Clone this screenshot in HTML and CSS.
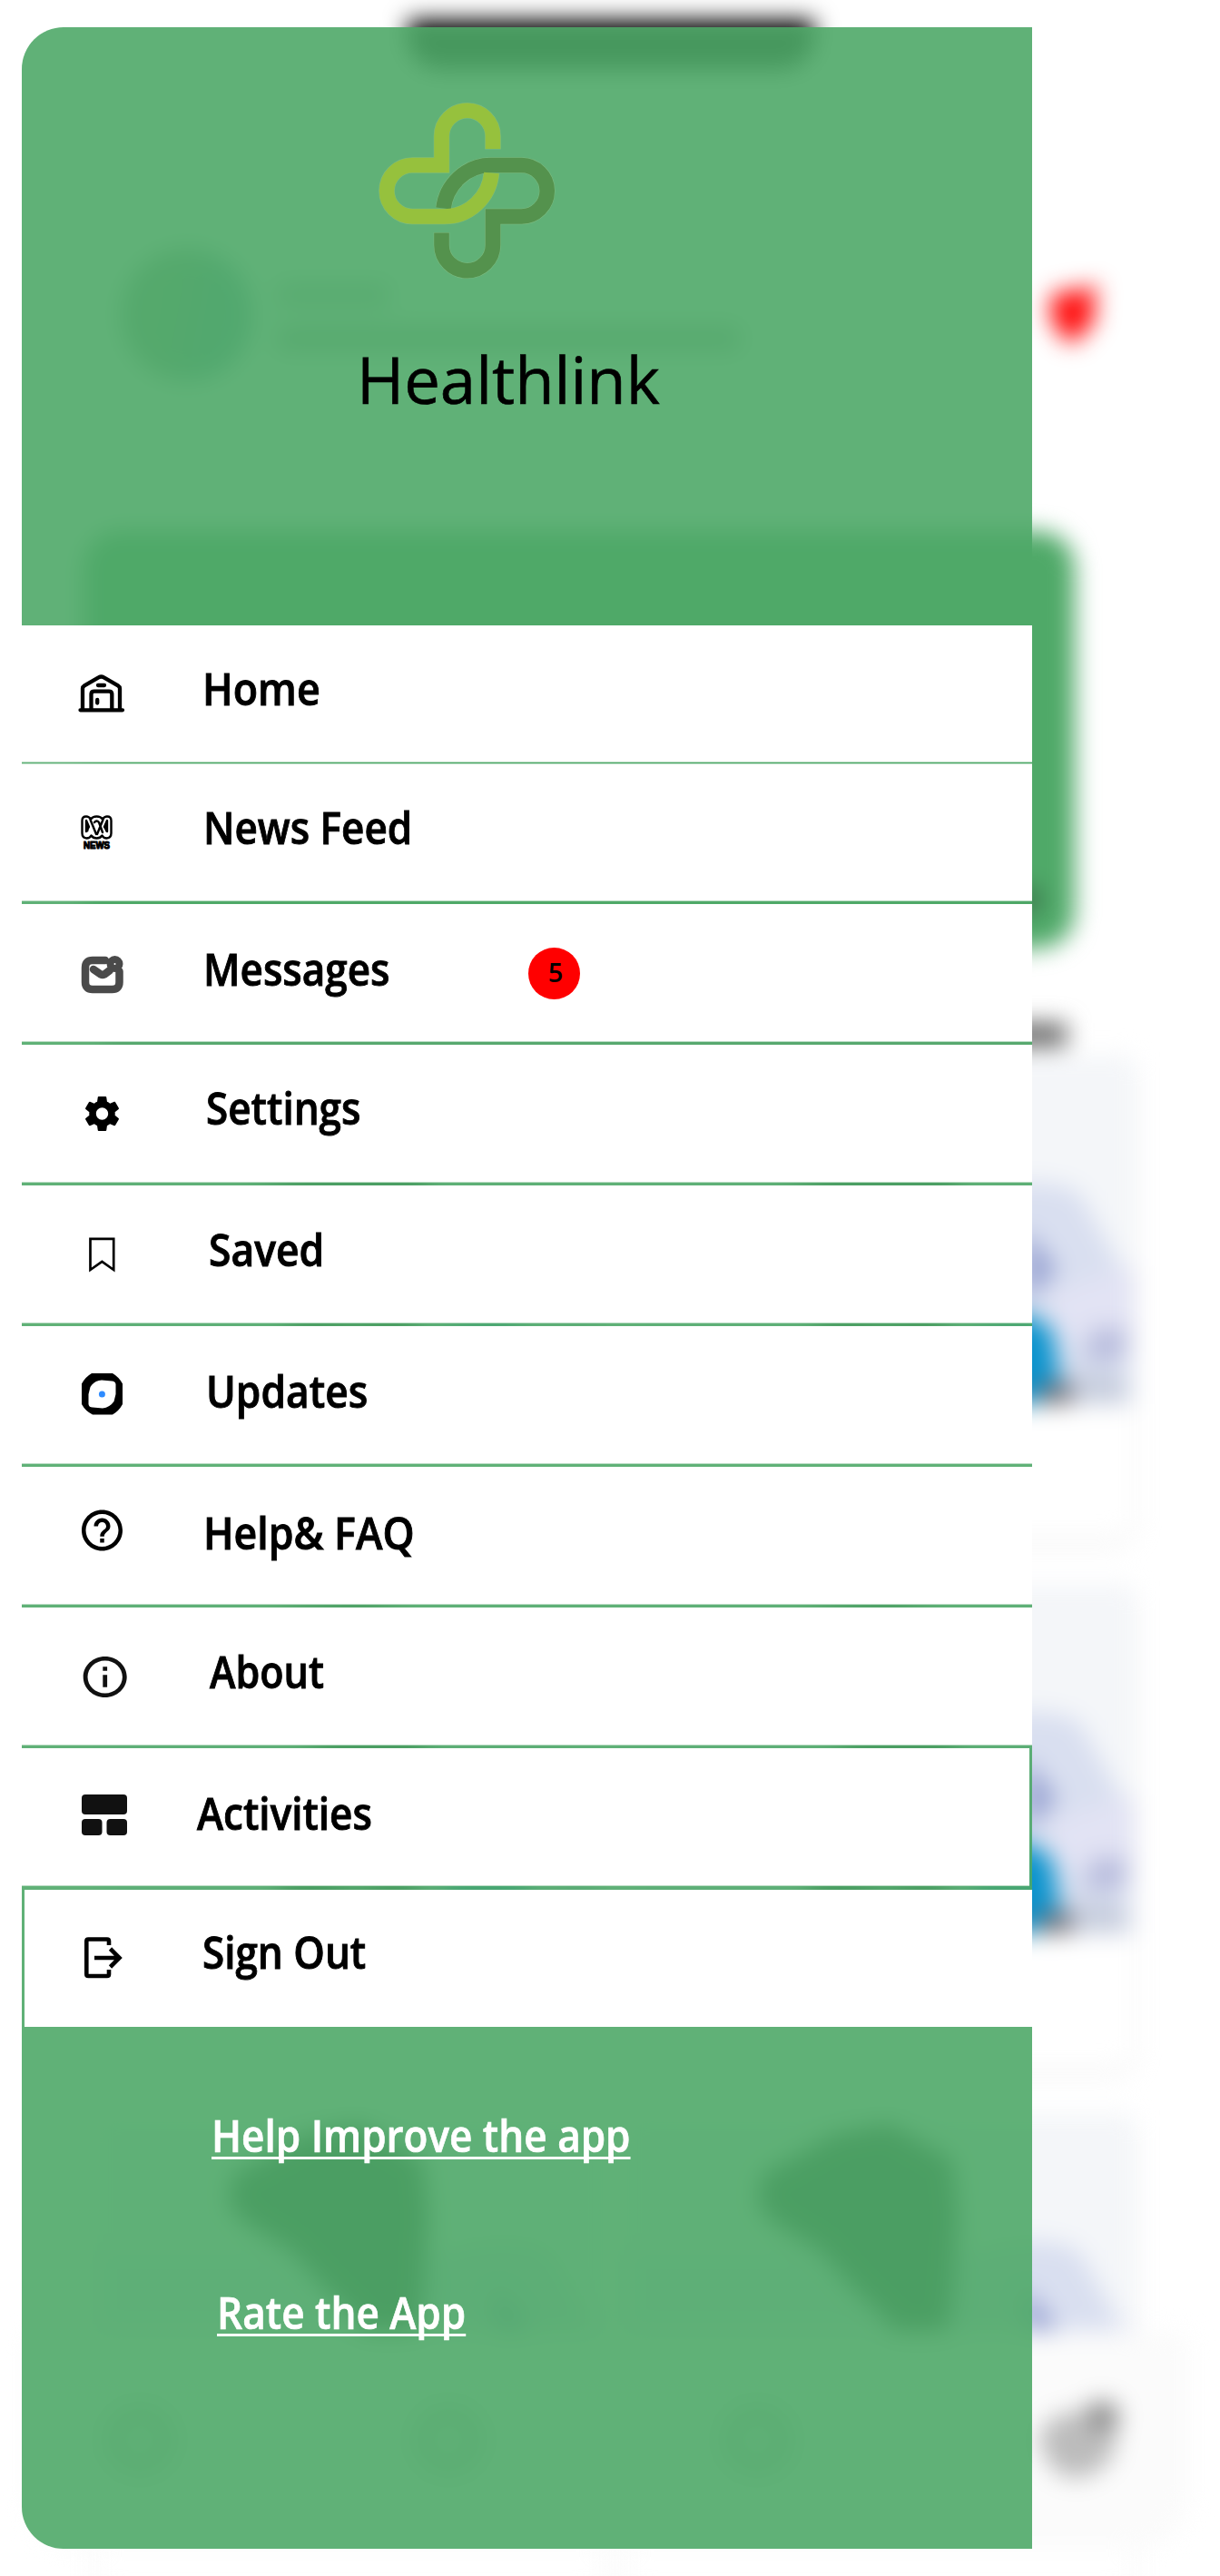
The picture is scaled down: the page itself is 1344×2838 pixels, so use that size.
FILE: index.html
```html
<!DOCTYPE html>
<html lang="en">
<head>
<meta charset="utf-8">
<title>Healthlink</title>
<link rel="stylesheet" href="styles.css">
</head>
<body>
<svg class="defs" aria-hidden="true">
  <symbol id="photo" viewBox="0 0 560 383">
    <rect width="560" height="383" fill="#f4f6f9"/>
    <path d="M0 150H440L560 260V383H0Z" fill="#e8ecf8"/>
    <path d="M340 170Q440 120 500 150L550 240 540 383H340Z" fill="#d9dff0"/>
    <path d="M440 190L476 235 440 270Z" fill="#98a3d2"/>
    <path d="M470 260L560 230V310H470Z" fill="#e2e3f4"/>
    <path d="M515 300H552V335H505Z" fill="#b9bddd"/>
    <path d="M470 350H552V383H460Z" fill="#c6cddd"/>
    <path d="M385 300L440 282 470 300 482 383H385Z" fill="#0b93cd"/>
    <path d="M455 360H492V383H455Z" fill="#77737a"/>
    <path d="M150 66L195 42 230 22 290 10 325 30 360 50 366 110 360 200 350 260 355 383H200L206 300 235 272 270 280 290 262 292 230 250 190 215 150 165 120 146 100Z" fill="#2f4435"/>
    <path d="M270 300L300 290 310 383H265Z" fill="#7f9388"/>
  </symbol>
</svg>
<div class="app">
  <div class="screen">
    <div class="notch"></div>
    <header class="profile">
      <span class="avatar"></span>
      <span class="greeting"><i class="line short"></i><i class="line"></i></span>
      <svg class="alert" viewBox="0 0 60 70"><path d="M4 18Q12 6 26 10L50 4 56 8 48 22 54 36 40 54 28 66 14 56 4 38Z" fill="#ff1010"/></svg>
    </header>
    <div class="banner"><i class="banner-mark"></i></div>
    <div class="section-title"></div>
    <main class="cards">
      <div class="card"><svg><use href="#photo"/></svg></div><div class="card"><svg><use href="#photo"/></svg></div>
      <div class="card"><svg><use href="#photo"/></svg></div><div class="card"><svg><use href="#photo"/></svg></div>
      <div class="card"><svg><use href="#photo"/></svg></div><div class="card"><svg><use href="#photo"/></svg></div>
    </main>
    <nav class="tabs">
      <i class="tab"></i><i class="tab"></i><i class="tab"></i>
      <svg class="tab-chat" viewBox="0 0 100 90"><path d="M8 40Q26 12 54 16L62 6Q88 0 94 16L86 62Q66 90 36 84 14 74 8 40Z" fill="#bcbcbc"/><circle cx="76" cy="20" r="16" fill="#8d8d8d"/></svg>
    </nav>
  </div>

  <aside class="drawer">
    <header class="brand">
      <svg class="logo" viewBox="416 112 196 196" fill="none" stroke-width="16.600">
        <g stroke="#8fc287" stroke-width="17.600" opacity=".6">
          <path d="M543 164.500V150a28.250 28.250 0 0 0-56.500 0V182H454.300a28.250 28.250 0 0 0 0 56.500H490c27 0 49-21 51.500-48"/>
          <path d="M486.500 256V270a28.250 28.250 0 0 0 56.500 0V238.500H574.500a28.250 28.250 0 0 0 0-56.500H540.500c-27 0-49 21.500-52 47.500"/>
        </g>
        <path d="M486.500 256.500V270a28.250 28.250 0 0 0 56.500 0V238.500H574.500a28.250 28.250 0 0 0 0-56.500H540.500c-27 0-49 21.500-52 47.500" stroke="#54924d"/>
        <path d="M543 164V150a28.250 28.250 0 0 0-56.500 0V182H454.300a28.250 28.250 0 0 0 0 56.500H490c27 0 49-21 51.500-48" stroke="#96c13d"/>
      </svg>
      <h1>Healthlink</h1>
    </header>

    <ul class="menu">
      <li class="item home">
        <svg viewBox="80 689 70 151" fill="none" stroke="#000" stroke-width="4.300" stroke-linecap="round" stroke-linejoin="round"><path d="M88.500 782.300H135M91 782V758.500q0-2 2-3.200L109 746.200q2.500-1.500 5 0L130 755.300q2 1.200 2 3.200V782M100.500 782V765q0-3.300 3.300-3.300H120q3.300 0 3.300 3.300V782M108 755H115M107.200 771V774.500"/></svg>
        <span>Home</span>
      </li>
      <li class="item news">
        <svg viewBox="80 841 70 152" fill="none" stroke="#000" stroke-linecap="round" stroke-linejoin="round">
          <path stroke-width="2.400" d="M90.500 904q0-4.500 4.500-4.500 3 0 5 3 2-3 6.500-3t6.500 3q2-3 5-3 4.500 0 4.500 4.500V918q0 5-5 5.500-3.500 0-5-3-2 3-6 3t-6-3q-1.500 3-5 3-5-.5-5-5.500Z"/>
          <path stroke-width="2.400" d="M95 904V916L98 911ZM118 904V916L115 911ZM99.500 903L106 919M113.500 903L107 919M104 906q2.500-3 5 0L113 917"/>
          <path stroke-width="3" d="M96 910V915M117.500 910V915"/>
          <text x="92" y="935" textLength="29" lengthAdjust="spacingAndGlyphs" class="news-word">NEWS</text>
        </svg>
        <span>News Feed</span>
      </li>
      <li class="item messages">
        <svg viewBox="80 996 70 152" fill="none" stroke="#4a4a4a" stroke-width="8.500" stroke-linecap="round" stroke-linejoin="round"><path d="M116 1058H102q-8 0-8 8V1082q0 8 8 8H123.500q8 0 8-8V1070M103 1068L111 1073.500q2 1 4 0L121 1069" /><circle cx="126.500" cy="1062" r="5" stroke-width="8"/></svg>
        <span>Messages</span>
        <b class="count">5</b>
      </li>
      <li class="item settings">
        <svg viewBox="80 1151 70 152"><path transform="translate(89.700 1204.200) scale(1.900)" d="M19.430 12.980c.04-.32.07-.64.07-.98s-.03-.66-.07-.98l2.110-1.650c.19-.15.24-.42.12-.64l-2-3.460c-.12-.22-.39-.3-.61-.22l-2.490 1c-.52-.4-1.080-.73-1.690-.98l-.38-2.650C14.460 2.180 14.250 2 14 2h-4c-.25 0-.46.18-.49.42l-.38 2.650c-.61.25-1.170.59-1.690.98l-2.490-1c-.23-.09-.49 0-.61.22l-2 3.460c-.13.22-.07.49.12.64l2.110 1.650c-.04.32-.07.65-.07.98s.03.66.07.98l-2.110 1.650c-.19.15-.24.42-.12.64l2 3.460c.12.22.39.3.61.22l2.490-1c.52.4 1.080.73 1.690.98l.38 2.650c.03.24.24.42.49.42h4c.25 0 .46-.18.49-.42l.38-2.650c.61-.25 1.170-.59 1.690-.98l2.490 1c.23.09.49 0 .61-.22l2-3.460c.12-.22.07-.49-.12-.64zM12 15.500c-1.930 0-3.500-1.570-3.500-3.500s1.570-3.500 3.500-3.500 3.500 1.570 3.500 3.500-1.570 3.500-3.500 3.500z"/></svg>
        <span>Settings</span>
      </li>
      <li class="item saved">
        <svg viewBox="80 1306 70 152" fill="none" stroke="#000" stroke-width="2.700"><path d="M99.500 1364.800H125.200V1399L112.400 1390 99.500 1399Z"/></svg>
        <span>Saved</span>
      </li>
      <li class="item updates">
        <svg viewBox="80 1461 70 152"><path fill-rule="evenodd" d="M101 1513H124Q131 1517 135 1524.500V1547Q131 1554.500 124 1558.500H102Q94 1554.500 90 1547V1524.500Q94 1517 101 1513ZM112 1520.500Q104 1521 99.500 1528L97.500 1536V1547Q98 1550.500 102 1550.500L113 1551.500Q121 1550.500 125.500 1544L127.500 1536V1525Q127 1521.500 123 1521.500Z"/><circle cx="112.400" cy="1536" r="3.500" fill="#2e8bff"/></svg>
        <span>Updates</span>
      </li>
      <li class="item help">
        <svg viewBox="80 1616 70 152"><path transform="translate(85.500 1659) scale(2.250)" d="M11 18h2v-2h-2v2zm1-16C6.480 2 2 6.480 2 12s4.480 10 10 10 10-4.480 10-10S17.520 2 12 2zm0 18c-4.410 0-8-3.590-8-8s3.590-8 8-8 8 3.590 8 8-3.590 8-8 8zm0-14c-2.210 0-4 1.790-4 4h2c0-1.100.9-2 2-2s2 .9 2 2c0 2-3 1.750-3 5h2c0-2.250 3-2.500 3-5 0-2.210-1.790-4-4-4z"/></svg>
        <span>Help&amp; FAQ</span>
      </li>
      <li class="item about">
        <svg viewBox="80 1771 70 152"><path fill="#111" transform="translate(86.900 1820.500) scale(2.400 2.250)" d="M11 7h2v2h-2zm0 4h2v6h-2zm1-9C6.480 2 2 6.480 2 12s4.480 10 10 10 10-4.480 10-10S17.520 2 12 2zm0 18c-4.410 0-8-3.590-8-8s3.590-8 8-8 8 3.590 8 8-3.590 8-8 8z"/></svg>
        <span>About</span>
      </li>
      <li class="item activities">
        <svg viewBox="80 1926 70 152" fill="#111"><rect x="90" y="1977" width="50" height="22" rx="4"/><rect x="90" y="2004" width="22.500" height="18" rx="4"/><rect x="117.500" y="2004" width="22.500" height="18" rx="4"/></svg>
        <span>Activities</span>
      </li>
      <li class="item signout">
        <svg viewBox="80 2082 70 151" fill="none" stroke="#000" stroke-width="4.600"><path d="M120 2143V2138.500q0-2-2-2H97.300q-2 0-2 2V2175q0 2 2 2H118q2 0 2-2V2170M104 2157H131M121.500 2147L131.500 2157 121.500 2167"/></svg>
        <span>Sign Out</span>
      </li>
    </ul>

    <footer class="links">
      <a class="improve">Help Improve the app</a>
      <a class="rate">Rate the App</a>
    </footer>
  </aside>
</div>
</body>
</html>
```
FILE: styles.css
```css
* { box-sizing: border-box; }

body {
  margin: 0;
  background: #fff;
  color: #000;
  font-family: "Open Sans", "Noto Sans", sans-serif;
}

.defs { display: block; width: 0; height: 0; }

.app {
  position: relative;
  width: 1344px;
  height: 2838px;
  overflow: hidden;
}

/* App screen, out of focus behind the drawer */
.screen {
  display: flex;
  flex-direction: column;
  position: relative;
  height: 2838px;
  filter: blur(13px);
}

.screen > * { flex-shrink: 0; }

.notch {
  width: 448px;
  height: 54px;
  margin: 22px 0 0 449px;
  border-radius: 0 0 36px 36px;
  background: #000;
}

.profile {
  display: flex;
  align-items: center;
  height: 160px;
  margin: 191px 120px 0 133px;
}

.avatar {
  width: 146px;
  height: 146px;
  border-radius: 50%;
  background: linear-gradient(100deg, #8aa88f 40%, #6ea5a8 70%);
}

.greeting {
  display: flex;
  flex-direction: column;
  gap: 20px;
  margin: 4px 0 0 26px;
  flex: 1;
}

.line { display: block; width: 510px; height: 28px; background: #a5b2a8; }
.line.short { width: 124px; background: #b6c2b9; }
.alert { width: 62px; height: 74px; margin-right: 9px; }

.banner {
  display: flex;
  justify-content: flex-end;
  align-items: flex-end;
  width: 1092px;
  height: 460px;
  margin: 158px 0 0 92px;
  padding: 0 42px 42px 0;
  border-radius: 40px;
  background: #4fa968;
}

.banner-mark { width: 14px; height: 24px; background: #2a4a34; }

.section-title {
  width: 1060px;
  height: 26px;
  margin: 82px 0 0 115px;
  background: #666;
}

.cards {
  display: grid;
  grid-template-columns: 560px 560px;
  grid-auto-rows: 533px;
  gap: 50px 23px;
  height: 1700px;
  margin: 11px 0 0 106px;
}

.card {
  border-radius: 20px;
  background: #fff;
  box-shadow: 0 3px 8px rgba(0, 0, 0, .13);
}

.card svg { display: block; width: 560px; height: 383px; }

.tabs {
  position: absolute;
  left: 30px;
  right: 34px;
  bottom: 30px;
  display: flex;
  justify-content: space-between;
  align-items: center;
  height: 240px;
  padding: 0 70px 0 86px;
  border-radius: 20px 20px 60px 60px;
  background: #fbfbfb;
}

.tab {
  width: 76px;
  height: 76px;
  border: 20px solid #c8ccc9;
  border-radius: 50%;
}

.tab-chat { width: 104px; height: 94px; }

/* Drawer */
.drawer {
  position: absolute;
  top: 30px;
  left: 24px;
  display: flex;
  flex-direction: column;
  width: 1113px;
  height: 2778px;
  border-radius: 46px 0 0 46px;
  background: rgba(79, 168, 104, .9);
}

.brand { height: 659px; padding-top: 82px; }

.logo { display: block; width: 196px; height: 196px; margin-left: 392px; }

h1 {
  width: max-content;
  margin: 70px 0 0 369px;
  font-size: 71px;
  font-weight: 400;
  line-height: 80px;
  -webkit-text-stroke: .6px #000;
  transform: scaleX(.996);
  transform-origin: left;
}

.menu {
  display: flex;
  flex-direction: column;
  gap: 3px;
  margin: 0;
  padding: 0;
  list-style: none;
}

.item {
  display: flex;
  align-items: flex-start;
  height: 152px;
  padding-left: 56px;
  background: #fff;
  box-shadow: inset 0 -1px #b9dcc3;
}

.item svg { flex: none; width: 70px; height: 152px; }

.item span {
  padding-top: 41px;
  margin-left: 74px;
  font-size: 48px;
  font-weight: 600;
  line-height: 60px;
  white-space: nowrap;
  -webkit-text-stroke: .9px #000;
  transform: scaleX(.917);
  transform-origin: left;
}

.home { height: 151px; margin-bottom: -2px; }
.home svg, .signout svg { height: 151px; }
.home span { padding-top: 40px; margin-left: 73px; transform: scaleX(.935); }
.news { box-shadow: inset 0 1px #b9dcc3, inset 0 -1px #b9dcc3; }
.messages span { padding-top: 42px; }
.settings span { padding-top: 40px; margin-left: 77px; }
.saved span { margin-left: 80px; transform: scaleX(.925); }
.updates span { padding-top: 42px; margin-left: 77px; transform: scaleX(.922); }
.help span { padding-top: 43px; transform: scaleX(.93); }
.about span { margin-left: 81px; transform: scaleX(.897); }
.activities { margin-right: 3px; }
.activities span { padding-top: 42px; margin-left: 67px; }
.signout { height: 151px; margin: 1px 0 0 3px; padding-left: 53px; box-shadow: none; }
.signout span { padding-top: 39px; margin-left: 73px; }

.news-word {
  fill: #000;
  stroke: #000;
  stroke-width: 1.2px;
  font: 700 11.5px "Liberation Sans", sans-serif;
}

.count {
  display: grid;
  place-items: center;
  width: 57px;
  height: 57px;
  margin: 48px 0 0 134px;
  padding: 0 0 5px 3px;
  border-radius: 50%;
  background: #f00;
  font-size: 29px;
  font-weight: 600;
}

.links {
  display: flex;
  flex-direction: column;
  align-items: flex-start;
  gap: 135px;
  padding-top: 90px;
}

.links a {
  color: #fff;
  font-size: 48px;
  font-weight: 600;
  line-height: 60px;
  text-decoration: underline 2.5px;
  text-underline-offset: 5px;
  text-decoration-skip-ink: none;
  -webkit-text-stroke: .7px #fff;
  transform: scaleX(.918);
  transform-origin: left;
}

.improve { margin-left: 209px; }
.rate { margin-left: 215px; }
```
